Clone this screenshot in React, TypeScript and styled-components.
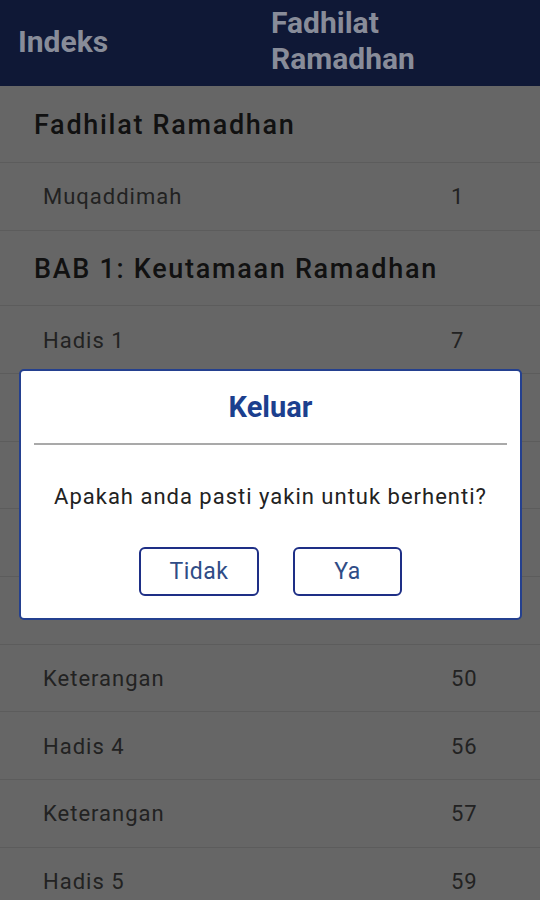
import { createGlobalStyle } from "styled-components";
import styled from "styled-components";

const GlobalStyle = createGlobalStyle`
  body {
    margin: 0;
    background: #666666;
    font-family: Roboto, "Liberation Sans", sans-serif;
  }
`;

const Screen = styled.div`
  position: relative;
  width: 540px;
  height: 900px;
  overflow: hidden;
  background: #666666;
`;

const Header = styled.div`
  height: 86px;
  background: #0f1836;
  display: flex;
  align-items: center;
  color: #888c99;
  font-weight: 700;
  font-size: 30px;
`;

const HeaderLeft = styled.div`
  width: 253px;
  padding-left: 18px;
  padding-bottom: 4px;
`;

const HeaderTitle = styled.div`
  line-height: 36px;
  margin-top: -4px;
`;

const List = styled.div`
  display: flex;
  flex-direction: column;
`;

interface SectionProps {
  h: number;
}

const Section = styled.div<SectionProps>`
  height: ${(p) => p.h}px;
  box-sizing: border-box;
  border-bottom: 1px solid #5c5c5c;
  display: flex;
  align-items: center;
  padding-left: 34px;
  padding-top: 2px;
  font-size: 27px;
  font-weight: 500;
  letter-spacing: 1.7px;
  color: #111111;
`;

const Item = styled.div`
  height: 67.7px;
  box-sizing: border-box;
  border-bottom: 1px solid #5c5c5c;
  display: flex;
  align-items: center;
  padding-left: 43px;
  padding-top: 1px;
  font-size: 22px;
  letter-spacing: 1px;
  color: #222222;
`;

const ItemLabel = styled.span`
  flex: 1;
`;

const ItemPage = styled.span`
  width: 89px;
`;

const Dialog = styled.div`
  position: absolute;
  left: 19px;
  top: 369px;
  width: 503px;
  height: 251px;
  box-sizing: border-box;
  background: #ffffff;
  border: 2px solid #24408f;
  border-radius: 5px;
  display: flex;
  flex-direction: column;
  align-items: center;
  padding: 20px 13px 0;
`;

const DialogTitle = styled.div`
  font-size: 29px;
  line-height: 32px;
  font-weight: 700;
  color: #1c3f8e;
`;

const Divider = styled.div`
  align-self: stretch;
  height: 2px;
  background: #a9a9a9;
  margin-top: 20px;
`;

const Message = styled.div`
  font-size: 22px;
  line-height: 28px;
  letter-spacing: 1px;
  color: #222222;
  margin-top: 38px;
`;

const Buttons = styled.div`
  display: flex;
  gap: 34px;
  margin-top: 36px;
`;

interface BtnProps {
  w: number;
}

const Button = styled.button<BtnProps>`
  width: ${(p) => p.w}px;
  height: 49px;
  background: #ffffff;
  border: 2px solid #1e2f86;
  border-radius: 6px;
  font-family: Roboto, "Liberation Sans", sans-serif;
  font-size: 23px;
  letter-spacing: 0.5px;
  color: #2f4c86;
  padding: 0;
`;

const rows: { label: string; page?: string; section?: boolean; h?: number }[] = [
  { label: "Fadhilat Ramadhan", section: true, h: 77 },
  { label: "Muqaddimah", page: "1" },
  { label: "BAB 1: Keutamaan Ramadhan", section: true, h: 75.5 },
  { label: "Hadis 1", page: "7" },
  { label: "Keterangan", page: "8" },
  { label: "Hadis 2", page: "31" },
  { label: "Keterangan", page: "32" },
  { label: "Hadis 3", page: "49" },
  { label: "Keterangan", page: "50" },
  { label: "Hadis 4", page: "56" },
  { label: "Keterangan", page: "57" },
  { label: "Hadis 5", page: "59" },
];

const App = () => {
  return (
    <Screen>
      <GlobalStyle />
      <Header>
        <HeaderLeft>Indeks</HeaderLeft>
        <HeaderTitle>
          Fadhilat
          <br />
          Ramadhan
        </HeaderTitle>
      </Header>
      <List>
        {rows.map((r, i) =>
          r.section ? (
            <Section key={i} h={r.h || 76}>
              {r.label}
            </Section>
          ) : (
            <Item key={i}>
              <ItemLabel>{r.label}</ItemLabel>
              <ItemPage>{r.page}</ItemPage>
            </Item>
          )
        )}
      </List>
      <Dialog>
        <DialogTitle>Keluar</DialogTitle>
        <Divider />
        <Message>Apakah anda pasti yakin untuk berhenti?</Message>
        <Buttons>
          <Button w={120}>Tidak</Button>
          <Button w={109}>Ya</Button>
        </Buttons>
      </Dialog>
    </Screen>
  );
};

export default App;
